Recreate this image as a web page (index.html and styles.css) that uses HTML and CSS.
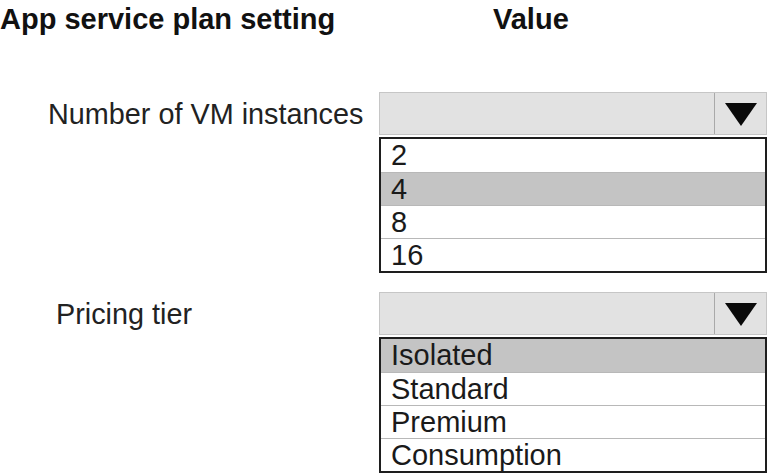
FILE: index.html
```html
<!DOCTYPE html>
<html>
<head>
<meta charset="utf-8">
<link rel="stylesheet" href="styles.css">
</head>
<body>
<div class="page">
  <div class="header">
    <div class="title">App service plan setting</div>
    <div class="value-title">Value</div>
  </div>
  <div class="rows">
    <div class="row">
      <div class="label label-vm">Number of VM instances</div>
      <div class="control">
        <div class="select">
          <div class="field"></div>
          <div class="button">
            <svg width="32" height="23" viewBox="0 0 32 23"><polygon points="0,0 32,0 16,23" fill="#0a0a0a"/></svg>
          </div>
        </div>
        <div class="list">
          <div class="item">2</div>
          <div class="item selected">4</div>
          <div class="item">8</div>
          <div class="item">16</div>
        </div>
      </div>
    </div>
    <div class="row row-second">
      <div class="label label-tier">Pricing tier</div>
      <div class="control">
        <div class="select">
          <div class="field"></div>
          <div class="button">
            <svg width="32" height="23" viewBox="0 0 32 23"><polygon points="0,0 32,0 16,23" fill="#0a0a0a"/></svg>
          </div>
        </div>
        <div class="list">
          <div class="item selected">Isolated</div>
          <div class="item">Standard</div>
          <div class="item">Premium</div>
          <div class="item">Consumption</div>
        </div>
      </div>
    </div>
  </div>
</div>
</body>
</html>
```

FILE: styles.css
```css
html, body {
  margin: 0;
  padding: 0;
  background: #ffffff;
}

body {
  font-family: "Liberation Sans", Arial, sans-serif;
  font-size: 29px;
  color: #1c1c1c;
}

.page {
  padding-top: 3px;
  width: 771px;
  height: 473px;
  overflow: hidden;
  box-sizing: border-box;
}

.header {
  display: flex;
  height: 32px;
  line-height: 32px;
  font-weight: bold;
  color: #111111;
}

.title {
  width: 493px;
  font-size: 29px;
}

.value-title {
  font-size: 29px;
}

.rows {
  margin-top: 57px;
  display: flex;
  flex-direction: column;
  gap: 19px;
}

.row {
  display: grid;
  grid-template-columns: 379px 388px;
}

.label {
  height: 43px;
  display: flex;
  align-items: center;
  line-height: 32px;
  color: #222222;
  font-size: 28.8px;
}

.label-vm {
  padding-left: 48px;
}

.label-tier {
  padding-left: 56px;
}

.control {
  display: flex;
  flex-direction: column;
  gap: 2px;
}

.select {
  display: flex;
  height: 43px;
  box-sizing: border-box;
  border: 1px solid #c6c6c6;
  background: #e2e2e2;
}

.field {
  flex: 1;
}

.button {
  width: 52px;
  border-left: 1px solid #a9a9a9;
  display: flex;
  align-items: center;
  justify-content: center;
  padding-top: 2px;
  box-sizing: border-box;
}

.button svg {
  display: block;
}

.list {
  border: 2px solid #1e1e1e;
  background: #ffffff;
  display: flex;
  flex-direction: column;
}

.item {
  height: 33px;
  box-sizing: border-box;
  line-height: 32px;
  padding-left: 10px;
  color: #1a1a1a;
}

.item + .item {
  border-top: 1px solid #b8b8b8;
}

.item.selected {
  background: #c4c4c4;
}
```
